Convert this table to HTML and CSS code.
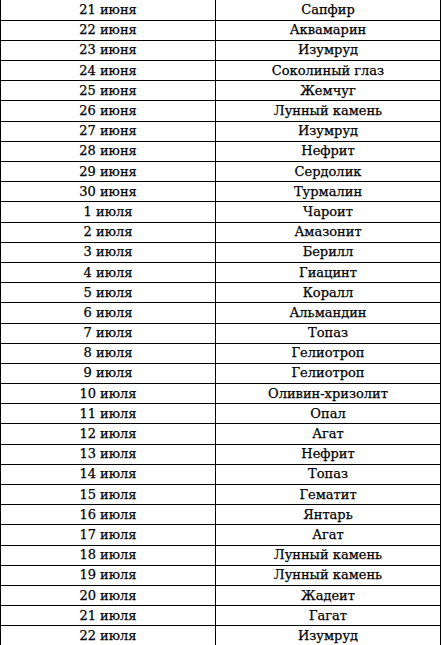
FILE: index.html
```html
<!DOCTYPE html>
<html lang="ru">
<head>
<meta charset="utf-8">
<link rel="stylesheet" href="styles.css">
</head>
<body>
<table class="stones">
<colgroup><col class="c-date"><col class="c-stone"></colgroup>
<tbody>
<tr><td>21 июня</td><td>Сапфир</td></tr>
<tr><td>22 июня</td><td>Аквамарин</td></tr>
<tr><td>23 июня</td><td>Изумруд</td></tr>
<tr><td>24 июня</td><td>Соколиный глаз</td></tr>
<tr><td>25 июня</td><td>Жемчуг</td></tr>
<tr><td>26 июня</td><td>Лунный камень</td></tr>
<tr><td>27 июня</td><td>Изумруд</td></tr>
<tr><td>28 июня</td><td>Нефрит</td></tr>
<tr><td>29 июня</td><td>Сердолик</td></tr>
<tr><td>30 июня</td><td>Турмалин</td></tr>
<tr><td>1 июля</td><td>Чароит</td></tr>
<tr><td>2 июля</td><td>Амазонит</td></tr>
<tr><td>3 июля</td><td>Берилл</td></tr>
<tr><td>4 июля</td><td>Гиацинт</td></tr>
<tr><td>5 июля</td><td>Коралл</td></tr>
<tr><td>6 июля</td><td>Альмандин</td></tr>
<tr><td>7 июля</td><td>Топаз</td></tr>
<tr><td>8 июля</td><td>Гелиотроп</td></tr>
<tr><td>9 июля</td><td>Гелиотроп</td></tr>
<tr><td>10 июля</td><td>Оливин-хризолит</td></tr>
<tr><td>11 июля</td><td>Опал</td></tr>
<tr><td>12 июля</td><td>Агат</td></tr>
<tr><td>13 июля</td><td>Нефрит</td></tr>
<tr><td>14 июля</td><td>Топаз</td></tr>
<tr><td>15 июля</td><td>Гематит</td></tr>
<tr><td>16 июля</td><td>Янтарь</td></tr>
<tr><td>17 июля</td><td>Агат</td></tr>
<tr><td>18 июля</td><td>Лунный камень</td></tr>
<tr><td>19 июля</td><td>Лунный камень</td></tr>
<tr><td>20 июля</td><td>Жадеит</td></tr>
<tr><td>21 июля</td><td>Гагат</td></tr>
<tr><td>22 июля</td><td>Изумруд</td></tr>
</tbody>
</table>
</body>
</html>
```

FILE: styles.css
```css
html, body {
  margin: 0;
  padding: 0;
  background: #ffffff;
}

.stones {
  border-collapse: collapse;
  width: 441px;
  table-layout: fixed;
  font-family: "DejaVu Serif", "Liberation Serif", serif;
  font-size: 13px;
  color: #000000;
  -webkit-text-stroke: 0.25px #000000;
}

.c-date {
  width: 215px;
}

.stones td {
  border: 1px solid #000000;
  height: 19.19px;
  padding: 0;
  text-align: center;
  vertical-align: middle;
  line-height: 16px;
}

.stones tr:first-child td {
  border-top: none;
  height: 19.7px;
}
```
